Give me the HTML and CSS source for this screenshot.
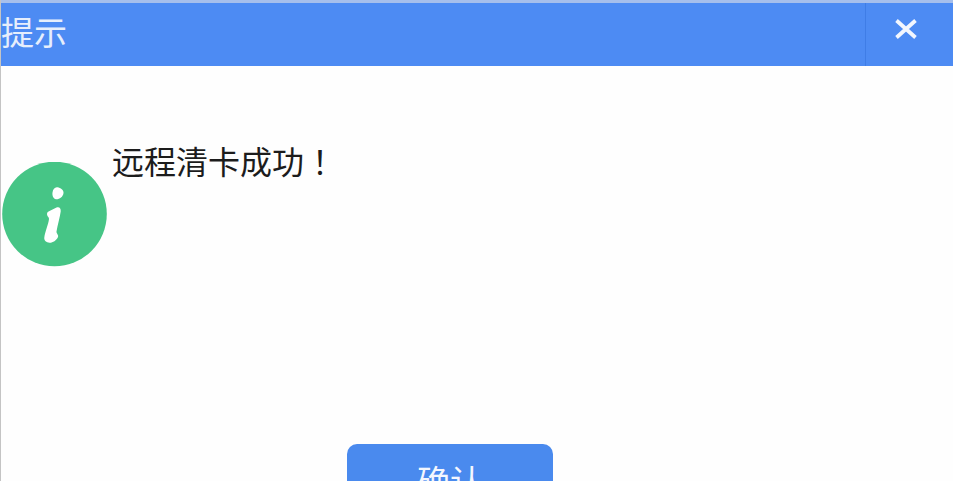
FILE: index.html
```html
<!DOCTYPE html>
<html lang="zh-CN">
<head>
<meta charset="utf-8">
<title>提示</title>
<link rel="stylesheet" href="styles.css">
</head>
<body>
<div class="dialog">
  <header class="titlebar">
    <div class="title">提示</div>
    <button class="close" aria-label="关闭">
      <svg width="24" height="20" viewBox="0 0 24 20"><path d="M2.500 1.500 21.500 18.500M21.500 1.500 2.500 18.500" fill="none" stroke="#f2f6fe" stroke-width="3.800"/></svg>
    </button>
  </header>
  <main class="content">
    <svg class="icon" width="105" height="105" viewBox="0 0 105 105">
      <circle cx="52.500" cy="52" r="52.300" fill="#46c586"/>
      <path fill="#fff" d="M50.500 30.500C51 27 53 24.800 55.500 25.300 58.500 26 62 28 61.500 31 61 35 57.500 37.500 54 37.300 51.500 37 50 33.500 50.500 30.500Z"/>
      <path fill="#fff" d="M45.500 54C44.500 52 45 50 47 49.300L54.500 45.500C57.500 44.500 59 46.500 58.700 49.500 58 55 55.500 63 54.500 69.500 54.300 71.500 56.800 73 56 75 54.500 78.500 50.500 81 47.500 80.800 44.500 80.500 41.800 78.500 42.300 75.500 43 70 46.500 62 47 57 47 55.500 46.200 55 45.500 54Z"/>
    </svg>
    <p class="message">远程清卡成功<span class="bang">！</span></p>
  </main>
  <footer class="actions">
    <button class="confirm">确认</button>
  </footer>
</div>
</body>
</html>
```

FILE: styles.css
```css
* { box-sizing: border-box; }
html, body {
  margin: 0;
  height: 481px;
  overflow: hidden;
  background: #fefefe;
  font-family: "Noto Sans CJK SC", "Liberation Sans", sans-serif;
}
.dialog {
  height: 481px;
  display: flex;
  flex-direction: column;
  border-left: 1px solid #c4c4c4;
  overflow: hidden;
}
.titlebar {
  flex: none;
  height: 66px;
  display: flex;
  justify-content: space-between;
  background: #4d8bf3;
  border-top: 3px solid #a6bfec;
}
.title {
  font-size: 33px;
  line-height: 57px;
  color: #e6eefc;
}
.close {
  width: 88px;
  padding: 0 8px 12px 0;
  display: flex;
  align-items: center;
  justify-content: center;
  background: none;
  border: 0;
  border-left: 1px solid #3f7de6;
}
.content {
  flex: none;
  height: 378px;
  display: flex;
  align-items: flex-start;
  gap: 5px;
  padding-left: 1px;
}
.icon {
  flex: none;
  margin-top: 96px;
}
.message {
  margin: 62px 0 0;
  font-size: 32px;
  line-height: 64px;
  color: #1c1c1c;
}
.bang {
  padding-left: 8px;
}
.actions {
  flex: none;
  display: flex;
  padding-left: 346px;
}
.confirm {
  width: 206px;
  height: 80px;
  padding: 0 0 8px;
  border: 0;
  border-radius: 10px;
  background: #4a8aee;
  color: #f4f7fe;
  font-family: inherit;
  font-size: 33px;
  line-height: 60px;
  display: block;
}
```
